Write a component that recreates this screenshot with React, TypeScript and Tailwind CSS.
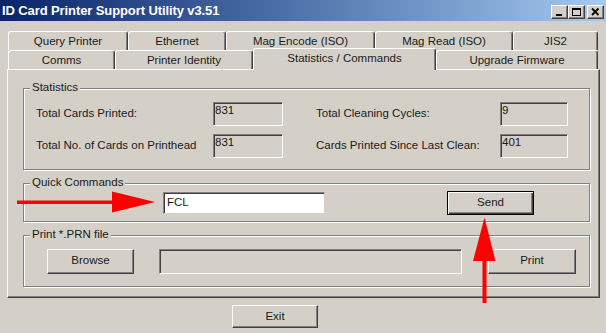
import React from 'react';

type TabDef = { label: string; w: string; active?: boolean };

const backRow: TabDef[] = [
  { label: 'Query Printer', w: 'w-[120px]' },
  { label: 'Ethernet', w: 'w-[98px]' },
  { label: 'Mag Encode (ISO)', w: 'w-[149px]' },
  { label: 'Mag Read (ISO)', w: 'w-[138px]' },
  { label: 'JIS2', w: 'w-[85px]' },
];

const frontRow: TabDef[] = [
  { label: 'Comms', w: 'w-[107px]' },
  { label: 'Printer Identity', w: 'w-[138px]' },
  { label: 'Statistics / Commands', w: 'w-[183px]', active: true },
  { label: 'Upgrade Firmware', w: 'w-[162px]' },
];

const raised =
  'border border-t-white border-l-white border-r-[#404040] border-b-[#404040] shadow-[inset_-1px_-1px_0_#808080]';
const sunken =
  'border border-t-[#808080] border-l-[#808080] border-r-white border-b-white shadow-[inset_1px_1px_0_#404040]';

function Tab({ tab }: { tab: TabDef }) {
  if (tab.active) {
    return (
      <div
        className={`${tab.w} relative z-10 -mt-[2px] h-[22px] flex justify-center pt-[1px] bg-[#d4d0c8] border-l border-t border-white border-r border-r-[#404040] rounded-t-[3px] shadow-[inset_-1px_0_0_#808080]`}
      >
        {tab.label}
      </div>
    );
  }
  return (
    <div
      className={`${tab.w} h-[19px] flex items-center justify-center pt-[1px] bg-[#d4d0c8] border-l border-t border-white border-r border-r-[#404040] rounded-t-[3px] shadow-[inset_-1px_0_0_#808080]`}
    >
      {tab.label}
    </div>
  );
}

function GroupBox({ title, className, children }: { title: string; className: string; children?: React.ReactNode }) {
  return (
    <div
      className={`relative border border-[#808080] shadow-[inset_1px_1px_0_#fff,1px_1px_0_#fff] ${className}`}
    >
      <span className="absolute left-[6px] -top-[8px] px-[2px] leading-[13px] bg-[#d4d0c8]">{title}</span>
      {children}
    </div>
  );
}

function Field({ value, className }: { value: string; className: string }) {
  return <div className={`${sunken} ${className} pl-[1px] pt-[1px] leading-[13px]`}>{value}</div>;
}

function TitleButton({ children, className = '' }: { children: React.ReactNode; className?: string }) {
  return (
    <div className={`${raised} w-[17px] h-[14px] bg-[#d4d0c8] flex items-center justify-center ${className}`}>
      {children}
    </div>
  );
}

export default function App() {
  return (
    <div className="relative w-[606px] h-[333px] overflow-hidden bg-[#d4d0c8] text-[#1a1a1a] text-[11.5px] font-['Liberation_Sans',Arial,sans-serif]">
      {/* Title bar */}
      <div className="h-[21px] flex items-start bg-gradient-to-r from-[#0a246a] to-[#a6caf0]">
        <div className="pl-[2px] pt-[3px] text-white font-bold text-[13px] leading-[15px] tracking-[-0.1px]">
          ID Card Printer Support Utility v3.51
        </div>
        <div className="ml-auto mr-[2px] pt-[5px] flex">
          <TitleButton>
            <svg width="11" height="10" viewBox="0 0 11 10">
              <rect x="2" y="7" width="6" height="2" fill="#000" />
            </svg>
          </TitleButton>
          <TitleButton>
            <svg width="11" height="10" viewBox="0 0 11 10">
              <rect x="1.5" y="1.5" width="8" height="7" fill="none" stroke="#000" />
              <rect x="1" y="1" width="9" height="2" fill="#000" />
            </svg>
          </TitleButton>
          <TitleButton className="ml-[2px]">
            <svg width="11" height="10" viewBox="0 0 11 10">
              <path d="M2 1.5 L8.5 8 M8.5 1.5 L2 8" stroke="#000" strokeWidth="1.8" />
            </svg>
          </TitleButton>
        </div>
      </div>

      {/* Tabs and page */}
      <div className="pl-[7px] pt-[10px]">
        <div className="flex pl-[1px]">
          {backRow.map((t) => (
            <Tab key={t.label} tab={t} />
          ))}
        </div>
        <div className="flex items-start pl-[1px] h-[19px] relative z-10">
          {frontRow.map((t) => (
            <Tab key={t.label} tab={t} />
          ))}
        </div>

        <div className="w-[593px] h-[229px] border border-white border-r-[#404040] border-b-[#404040] shadow-[inset_-1px_-1px_0_#808080]">
          {/* Statistics */}
          <GroupBox title="Statistics" className="ml-[15px] mt-[18px] w-[567px] h-[82px] pt-[13px] pl-[12px]">
            <div className="flex flex-col gap-[8px]">
              <div className="flex items-center h-[24px]">
                <span className="w-[177px]">Total Cards Printed:</span>
                <Field value="831" className="w-[70px] h-[24px]" />
                <span className="ml-[33px] w-[184px]">Total Cleaning Cycles:</span>
                <Field value="9" className="w-[68px] h-[24px]" />
              </div>
              <div className="flex items-center h-[24px]">
                <span className="w-[177px]">Total No. of Cards on Printhead</span>
                <Field value="831" className="w-[70px] h-[24px]" />
                <span className="ml-[33px] w-[184px]">Cards Printed Since Last Clean:</span>
                <Field value="401" className="w-[68px] h-[24px]" />
              </div>
            </div>
          </GroupBox>

          {/* Quick Commands */}
          <GroupBox title="Quick Commands" className="ml-[15px] mt-[13px] w-[567px] h-[39px] flex items-center pl-[139px]">
            <div className="w-[162px] h-[22px] bg-white border border-t-[#808080] border-l-[#808080] border-r-[#d4d0c8] border-b-[#d4d0c8] shadow-[inset_1px_1px_0_#404040] flex items-center pl-[3px]">
              FCL
            </div>
            <button className="ml-[122px] w-[87px] h-[24px] bg-[#d4d0c8] border border-black shadow-[inset_1px_1px_0_#fff,inset_-1px_-1px_0_#404040,inset_-2px_-2px_0_#808080] flex items-center justify-center">
              Send
            </button>
          </GroupBox>

          {/* Print PRN */}
          <GroupBox title="Print *.PRN file" className="ml-[15px] mt-[13px] w-[567px] h-[52px] flex items-center pl-[23px]">
            <button className={`${raised} w-[87px] h-[25px] bg-[#d4d0c8] flex items-center justify-center`}>
              Browse
            </button>
            <div className={`${sunken} ml-[25px] w-[303px] h-[25px]`} />
            <button className={`${raised} ml-[26px] w-[88px] h-[25px] bg-[#d4d0c8] flex items-center justify-center`}>
              Print
            </button>
          </GroupBox>
        </div>

        <button className={`${raised} ml-[225px] mt-[7px] w-[86px] h-[23px] bg-[#d4d0c8] flex items-center justify-center`}>
          Exit
        </button>
      </div>

      {/* Red annotation arrows */}
      <svg className="absolute left-0 top-0 pointer-events-none" width="606" height="333" viewBox="0 0 606 333">
        <rect x="17" y="200.5" width="97" height="3.5" fill="#f00" />
        <polygon points="112,191.5 112,212.5 155,202" fill="#f00" />
        <rect x="482.5" y="258" width="4" height="45" fill="#f00" />
        <polygon points="473,261 495.5,261 484.5,217.5" fill="#f00" />
      </svg>
    </div>
  );
}
